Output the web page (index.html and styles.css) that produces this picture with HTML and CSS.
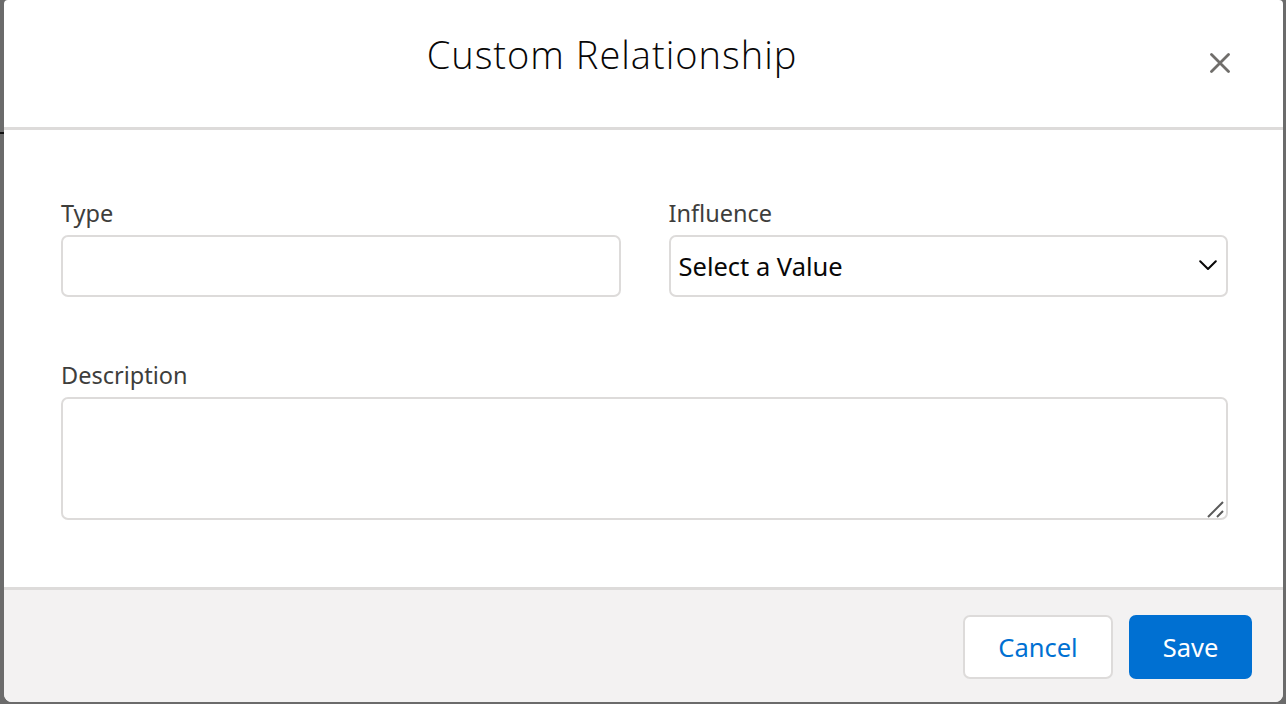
FILE: index.html
```html
<!DOCTYPE html>
<html lang="en">
<head>
<meta charset="utf-8">
<title>Custom Relationship</title>
<link rel="stylesheet" href="styles.css">
</head>
<body>
<div class="backdrop-mark"></div>
<section class="modal" role="dialog" aria-labelledby="modal-title">
  <header class="modal-header">
    <h2 class="modal-title" id="modal-title">Custom Relationship</h2>
    <button class="close-btn" type="button" aria-label="Close">
      <svg viewBox="0 0 20 20" width="20" height="20" aria-hidden="true">
        <path d="M1.5 1.5 L18.5 18.5 M18.5 1.5 L1.5 18.5" stroke="#706e6b" stroke-width="2.8" stroke-linecap="round" fill="none"/>
      </svg>
    </button>
  </header>
  <div class="modal-body">
    <div class="row two-col">
      <div class="field">
        <label class="field-label" for="type">Type</label>
        <input class="field-input" id="type" type="text">
      </div>
      <div class="field">
        <label class="field-label" for="influence">Influence</label>
        <div class="select-box" id="influence">
          <span class="select-value">Select a Value</span>
          <svg class="chevron" viewBox="0 0 18 11" width="18" height="11" aria-hidden="true">
            <path d="M1.2 1.2 L9 9 L16.8 1.2" stroke="#080707" stroke-width="2" fill="none" stroke-linecap="round" stroke-linejoin="round"/>
          </svg>
        </div>
      </div>
    </div>
    <div class="row">
      <div class="field">
        <label class="field-label" for="description">Description</label>
        <div class="textarea-wrap">
          <textarea class="field-textarea" id="description"></textarea>
          <svg class="grip" viewBox="0 0 18 18" width="18" height="18" aria-hidden="true">
            <path d="M2 17 L17 2 M11 17 L17 11" stroke="#5a5a5a" stroke-width="2" fill="none"/>
          </svg>
        </div>
      </div>
    </div>
  </div>
  <footer class="modal-footer">
    <button class="btn btn-neutral" type="button">Cancel</button>
    <button class="btn btn-brand" type="button">Save</button>
  </footer>
</section>
</body>
</html>
```
FILE: styles.css
```css
* { box-sizing: border-box; }

html, body {
  margin: 0;
  padding: 0;
}

body {
  width: 1286px;
  height: 704px;
  background: #6b6b6b;
  font-family: "Noto Sans", "Open Sans", Arial, sans-serif;
  overflow: hidden;
  position: relative;
}

.backdrop-mark {
  position: absolute;
  left: 0;
  top: 132px;
  width: 4px;
  height: 2px;
  background: #111;
}

.modal {
  margin-left: 4px;
  width: 1279px;
  height: 702px;
  background: #fff;
  border-radius: 4px 4px 8px 8px;
  display: flex;
  flex-direction: column;
  overflow: hidden;
}

.modal-header {
  height: 130px;
  flex: none;
  border-bottom: 3px solid #dddbda;
  display: flex;
  align-items: flex-start;
  padding: 30px 40px 0 23px;
}

.modal-title {
  flex: 1;
  margin: 0;
  text-align: center;
  font-family: "Open Sans", "Noto Sans", sans-serif;
  font-size: 38px;
  letter-spacing: 1px;
  line-height: 48px;
  font-weight: 300;
  color: #080707;
}

.close-btn {
  width: 46px;
  height: 46px;
  margin-top: 10px;
  border: 0;
  background: transparent;
  padding: 0;
  display: flex;
  align-items: center;
  justify-content: center;
  cursor: pointer;
}

.modal-body {
  flex: 1;
  padding: 68px 55px 0 57px;
  display: flex;
  flex-direction: column;
  gap: 63px;
}

.two-col {
  display: grid;
  grid-template-columns: 1fr 1fr;
  column-gap: 48px;
}

.field {
  display: flex;
  flex-direction: column;
}

.field-label {
  font-size: 23.5px;
  line-height: 31px;
  color: #3e3e3c;
  margin-bottom: 6px;
}

.field-input,
.select-box,
.field-textarea {
  border: 2px solid #dddbda;
  border-radius: 7px;
  background: #fff;
  font-family: inherit;
}

.field-input {
  height: 62px;
  width: 100%;
}

.select-box {
  height: 62px;
  display: flex;
  align-items: center;
  justify-content: space-between;
  padding: 0 9px 0 8px;
}

.select-value {
  font-size: 25.5px;
  color: #080707;
}

.chevron {
  display: block;
  margin-top: -2px;
}

.textarea-wrap {
  position: relative;
}

.field-textarea {
  display: block;
  height: 123px;
  width: 100%;
  resize: none;
}

.grip {
  position: absolute;
  right: 4px;
  bottom: 2px;
}

.modal-footer {
  height: 115px;
  flex: none;
  background: #f3f2f2;
  border-top: 3px solid #dddbda;
  display: flex;
  justify-content: flex-end;
  align-items: flex-start;
  gap: 16px;
  padding: 25px 31px 0 0;
}

.btn {
  height: 64px;
  border-radius: 7px;
  font-family: inherit;
  font-size: 25.5px;
  padding: 0;
  cursor: pointer;
}

.btn-neutral {
  width: 150px;
  background: #fff;
  border: 2px solid #dddbda;
  color: #0070d2;
}

.btn-brand {
  width: 123px;
  background: #0070d2;
  border: 2px solid #0070d2;
  color: #fff;
}
```
